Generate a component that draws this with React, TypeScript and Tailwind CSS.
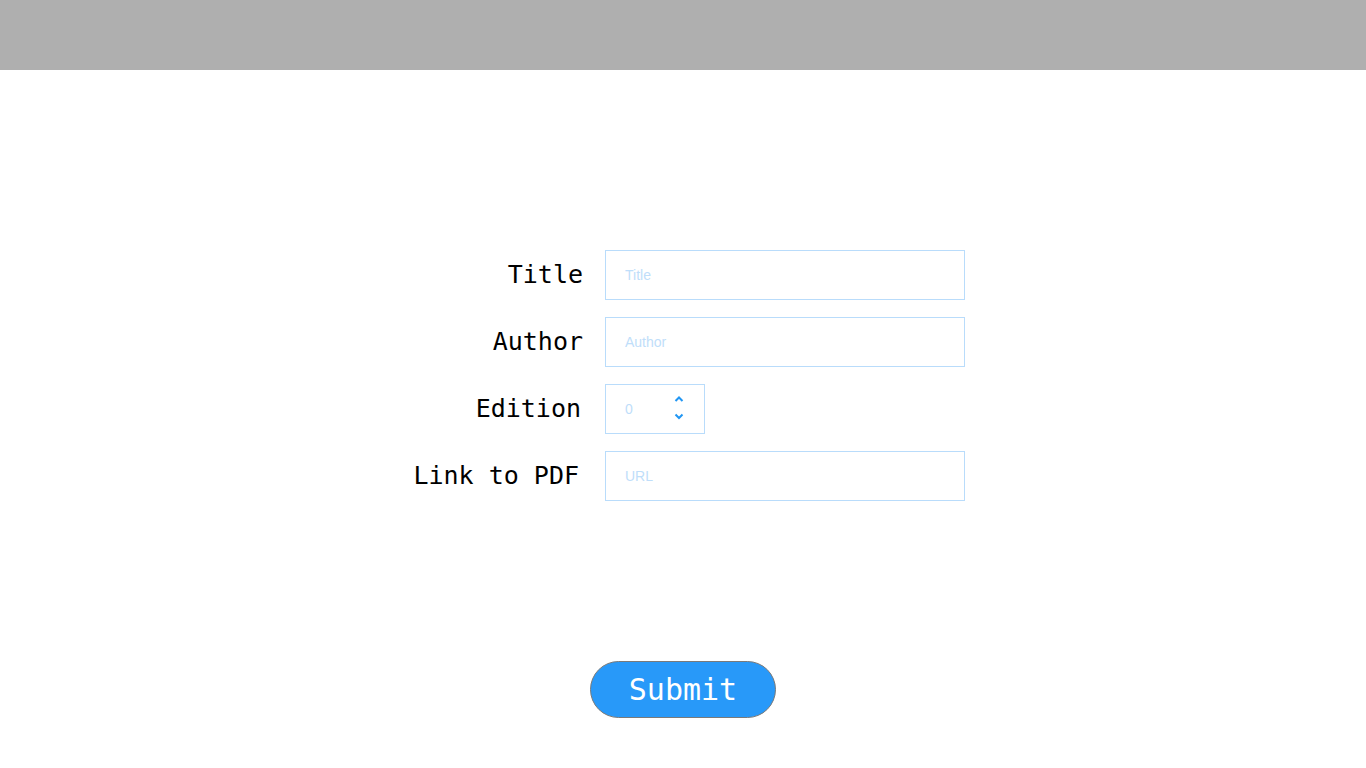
import React from "react";

const mono = { fontFamily: '"DejaVu Sans Mono", monospace' };

function Row({
  label,
  pad = "",
  children,
}: {
  label: string;
  pad?: string;
  children: React.ReactNode;
}) {
  return (
    <>
      <label className={"text-right text-[25px] text-black leading-none pb-[2px] " + pad} style={mono}>
        {label}
      </label>
      <div className="flex items-center">{children}</div>
    </>
  );
}

const inputCls =
  "h-[50px] border border-[#b9dcfb] bg-white pl-[19px] text-[14px] text-[#333] outline-none placeholder:text-[#bfdefa] font-['Liberation_Sans',Arial,sans-serif]";

export default function App() {
  return (
    <div className="min-h-[768px] bg-white">
      <div className="h-[70px] bg-[#afafaf]" />
      <div className="flex flex-col items-center pt-[180px]">
        <div className="grid grid-cols-[182px_360px] gap-x-[22px] gap-y-[17px] items-center">
          <Row label="Title" pad="pr-[0px]">
            <input className={inputCls + " w-[360px]"} placeholder="Title" />
          </Row>
          <Row label="Author" pad="pr-[0px]">
            <input className={inputCls + " w-[360px]"} placeholder="Author" />
          </Row>
          <Row label="Edition" pad="pr-[2px]">
            <div className="relative">
              <input className={inputCls + " w-[100px]"} placeholder="0" />
              <svg
                className="absolute left-[69px] top-[11px]"
                width="10"
                height="28"
                viewBox="0 0 10 28"
                fill="none"
                stroke="#2196f3"
                strokeWidth="2"
              >
                <path d="M1.5 6 L5 2.5 L8.5 6" />
                <path d="M1.5 19.5 L5 23 L8.5 19.5" />
              </svg>
            </div>
          </Row>
          <Row label="Link to PDF" pad="pr-[4px]">
            <input className={inputCls + " w-[360px]"} placeholder="URL" />
          </Row>
        </div>
        <button
          className="mt-[160px] h-[57px] w-[186px] rounded-full border border-[#7a7a7a] bg-[#2899f9] text-[30px] text-white leading-none"
          style={mono}
        >
          Submit
        </button>
      </div>
    </div>
  );
}
